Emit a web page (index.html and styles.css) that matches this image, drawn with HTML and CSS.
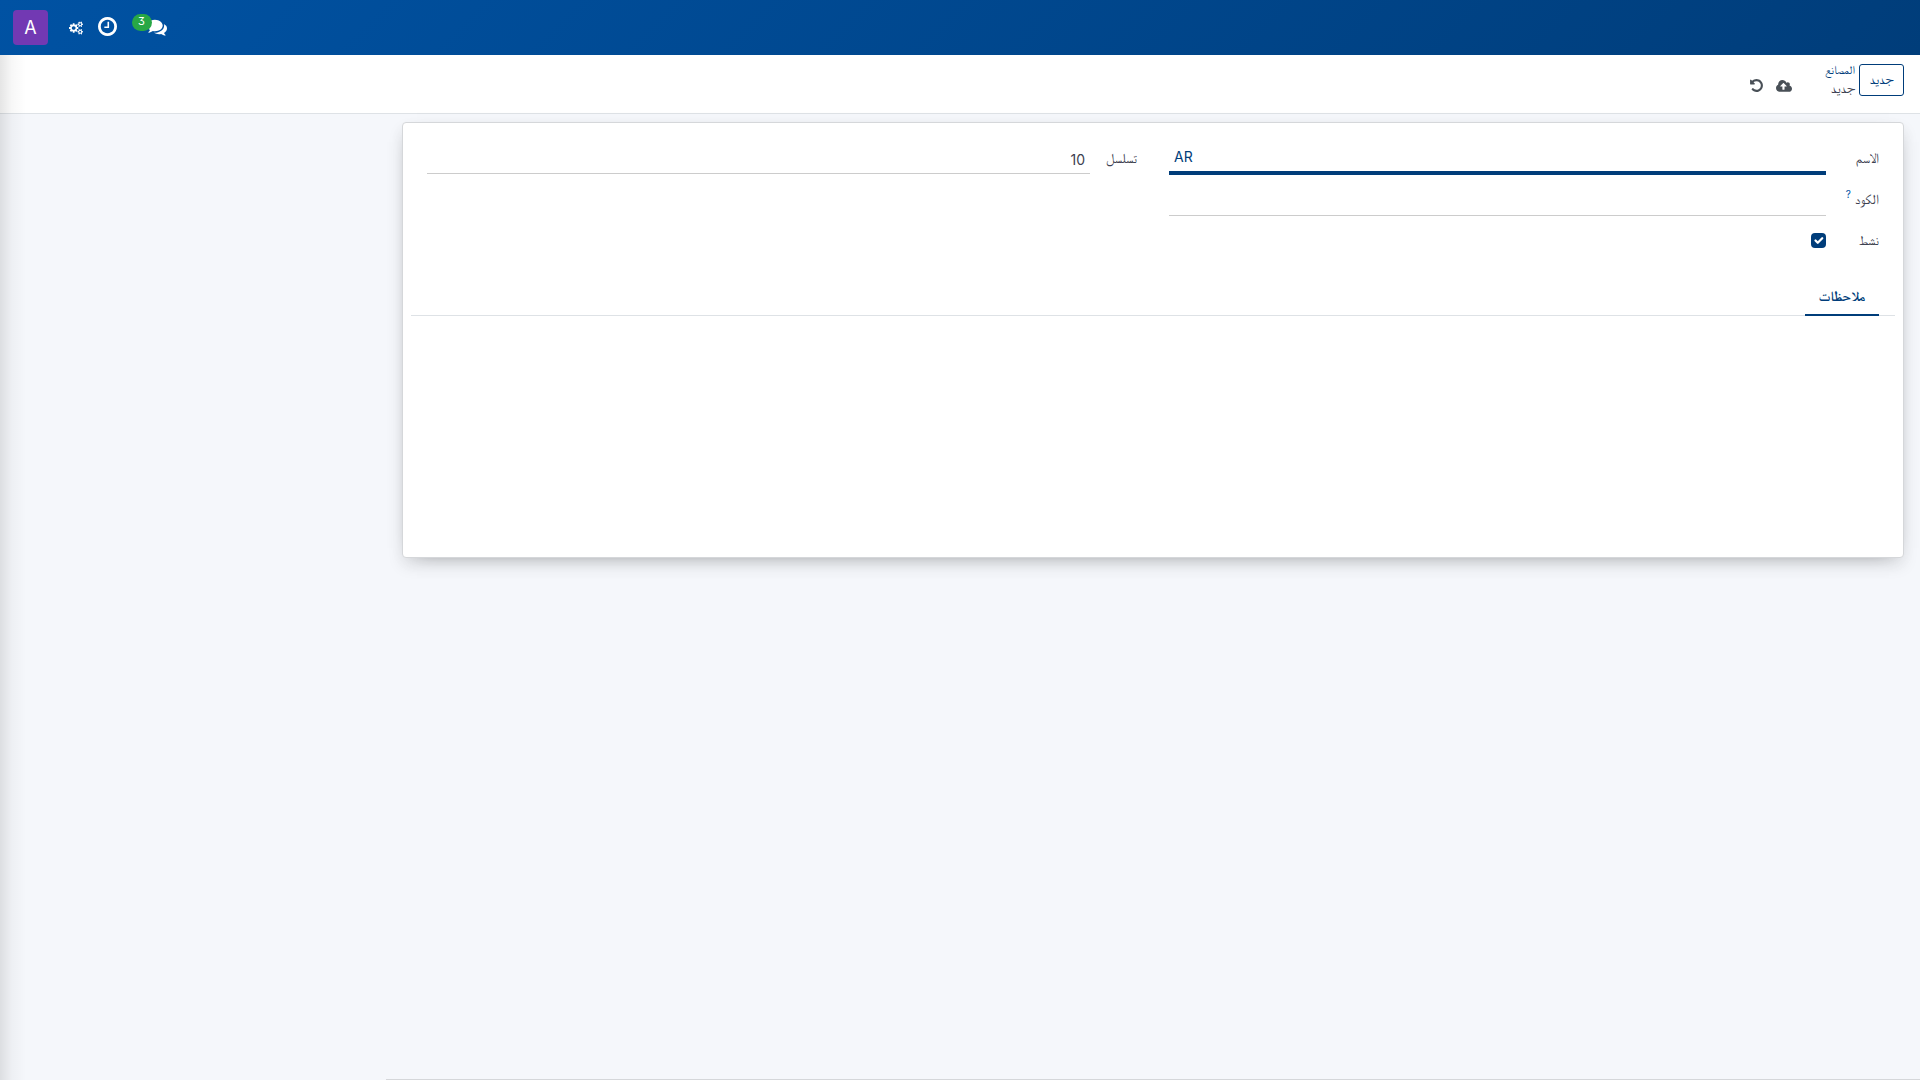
FILE: index.html
```html
<!DOCTYPE html>
<html lang="ar" dir="rtl">
<head>
<meta charset="utf-8">
<title>جديد</title>
<link rel="stylesheet" href="styles.css">
</head>
<body>
<header class="navbar">
  <div class="systray">
    <button class="nav-item messages" aria-label="messages">
      <svg class="icon icon-comments" viewBox="0 0 1792 1792"><path d="M1408 768q0 139-94 257t-256.5 186.5-353.5 68.5q-86 0-176-16-124 88-278 128-36 9-86 16h-3q-11 0-20.5-8t-11.5-21q-1-3-1-6.5t.5-6.5 2-6l2.5-5 3.5-5.5 4-5 4.5-5 4-4.5q5-6 23-25t26-29.5 22.5-29 25-38.5 20.5-44q-124-72-195-177t-71-224q0-139 94-257t256.5-186.5 353.5-68.5 353.5 68.5 256.5 186.5 94 257zm384 256q0 120-71 224.5t-195 176.5q10 24 20.5 44t25 38.5 22.5 29 26 29.5 23 25q1 1 4 4.5t4.5 5 4 5 3.5 5.5l2.5 5 2 6 .5 6.5-1 6.5q-3 14-13 22t-22 7q-50-7-86-16-154-40-278-128-90 16-176 16-271 0-472-132 58 4 88 4 161 0 309-45t264-129q125-92 192-212t67-254q0-77-23-152 129 71 204 178t75 230z"/></svg>
      <span class="badge">3</span>
    </button>
    <button class="nav-item" aria-label="activities">
      <svg class="icon icon-clock" viewBox="128 128 1536 1536"><path d="M1024 544v448q0 14-9 23t-23 9h-320q-14 0-23-9t-9-23v-64q0-14 9-23t23-9h224v-352q0-14 9-23t23-9h64q14 0 23 9t9 23zm416 352q0-148-73-273t-198-198-273-73-273 73-198 198-73 273 73 273 198 198 273 73 273-73 198-198 73-273zm224 0q0 209-103 385.5t-279.5 279.5-385.5 103-385.5-103-279.5-279.5-103-385.5 103-385.5 279.5-279.5 385.5-103 385.5 103 279.5 279.5 103 385.5z"/></svg>
    </button>
    <button class="nav-item" aria-label="settings">
      <svg class="icon icon-cogs" viewBox="0 0 1920 1792"><path d="M896 896q0-106-75-181t-181-75-181 75-75 181 75 181 181 75 181-75 75-181zm768 512q0-52-38-90t-90-38-90 38-38 90q0 53 37.500 90.500t90.500 37.500 90.500-37.500 37.500-90.500zm0-1024q0-52-38-90t-90-38-90 38-38 90q0 53 37.500 90.500t90.500 37.500 90.500-37.500 37.500-90.500zm-384 421v185q0 10-7 19.500t-16 10.500l-155 24q-11 35-32 76 34 48 90 115 7 11 7 20 0 12-7 19-23 30-82.500 89.500t-78.500 59.500q-11 0-21-7l-115-90q-37 19-77 31-11 108-23 155-7 24-30 24h-186q-11 0-20-7.500t-10-17.500l-23-153q-34-10-75-31l-118 89q-7 7-20 7-11 0-21-8-144-133-144-160 0-9 7-19 10-14 41-53t47-61q-23-44-35-82l-152-24q-10-1-17-9.500t-7-19.500v-185q0-10 7-19.500t16-10.500l155-24q11-35 32-76-34-48-90-115-7-11-7-20 0-12 7-20 22-30 82-89t79-59q11 0 21 7l115 90q34-18 77-32 11-108 23-154 7-24 30-24h186q11 0 20 7.500t10 17.500l23 153q34 10 75 31l118-89q8-7 20-7 11 0 21 8 144 133 144 160 0 8-7 19-12 16-42 54t-45 60q23 48 34 82l152 23q10 2 17 10.500t7 19.500zm640 533v140q0 16-149 31-12 27-30 52 51 113 51 138 0 4-4 7-122 71-124 71-8 0-46-47t-52-68q-20 2-30 2t-30-2q-14 21-52 68t-46 47q-2 0-124-71-4-3-4-7 0-25 51-138-18-25-30-52-149-15-149-31v-140q0-16 149-31 13-29 30-52-51-113-51-138 0-4 4-7 4-2 35-20t59-34 30-16q8 0 46 46.500t52 67.500q20-2 30-2t30 2q51-71 92-112l6-2q4 0 124 70 4 3 4 7 0 25-51 138 17 23 30 52 149 15 149 31zm0-1024v140q0 16-149 31-12 27-30 52 51 113 51 138 0 4-4 7-122 71-124 71-8 0-46-47t-52-68q-20 2-30 2t-30-2q-14 21-52 68t-46 47q-2 0-124-71-4-3-4-7 0-25 51-138-18-25-30-52-149-15-149-31v-140q0-16 149-31 13-29 30-52-51-113-51-138 0-4 4-7 4-2 35-20t59-34 30-16q8 0 46 46.500t52 67.500q20-2 30-2t30 2q51-71 92-112l6-2q4 0 124 70 4 3 4 7 0 25-51 138 17 23 30 52 149 15 149 31z"/></svg>
    </button>
    <button class="avatar">A</button>
  </div>
</header>

<section class="control-panel">
  <button class="btn-new">جديد</button>
  <nav class="breadcrumb">
    <a class="crumb-link" href="#">المصانع</a>
    <span class="crumb-current">جديد</span>
  </nav>
  <div class="status-actions">
    <svg class="icon icon-cloud" viewBox="0 0 1920 1792"><path d="M1280 864q0-14-9-23l-352-352q-9-9-23-9t-23 9l-351 351q-10 12-10 24 0 14 9 23t23 9h224v352q0 13 9.500 22.500t22.500 9.500h192q13 0 22.500-9.500t9.500-22.500v-352h224q13 0 22.500-9.500t9.500-22.500zm640 288q0 159-112.500 271.500t-271.500 112.500h-1088q-185 0-316.500-131.500t-131.500-316.500q0-130 70-240t188-165q-2-30-2-43 0-212 150-362t362-150q156 0 285.500 87t188.500 231q71-62 166-62 106 0 181 75t75 181q0 76-41 138 130 31 213.500 135.500t83.500 238.500z"/></svg>
    <svg class="icon icon-undo" viewBox="0 0 1792 1792"><path d="M1664 896q0 156-61 298t-164 245-245 164-298 61q-172 0-327-72.500t-264-204.500q-7-10-6.500-22.500t8.500-20.500l137-138q10-9 25-9 16 2 23 12 73 95 179 147t225 52q104 0 198.500-40.500t163.500-109.500 109.500-163.500 40.500-198.500-40.500-198.500-109.500-163.500-163.500-109.500-198.500-40.500q-98 0-188 35.500t-160 101.500l137 138q31 30 14 69-17 40-59 40h-448q-26 0-45-19t-19-45v-448q0-42 40-59 39-17 69 14l130 129q107-101 244.500-156.500t284.500-55.500q156 0 298 61t245 164 164 245 61 298z"/></svg>
  </div>
</section>

<main class="content">
  <section class="sheet">
    <div class="groups">
      <div class="group group-main">
        <label class="label">الاسم</label>
        <div class="field field-focus">AR</div>
        <label class="label label-low">الكود <sup class="help">?</sup></label>
        <div class="field"></div>
        <label class="label label-low">نشط</label>
        <div class="check-cell"><span class="checkbox"><svg viewBox="0 0 20 20"><path d="m6 10 3 3 6-6"/></svg></span></div>
      </div>
      <div class="group group-side">
        <label class="label">تسلسل</label>
        <div class="field field-number">10</div>
      </div>
    </div>
    <div class="tabs"><a class="tab" href="#">ملاحظات</a></div>
  </section>
</main>
<footer class="chatter-edge"></footer>
<div class="edge-shade"></div>
</body>
</html>
```
FILE: styles.css
```css
* { box-sizing: border-box; }
body {
  margin: 0;
  height: 100vh;
  overflow: hidden;
  display: flex;
  flex-direction: column;
  background: #f5f7fb;
  color: #3d4150;
  font: 14px/20px Inter, FreeSerif, "DejaVu Sans", sans-serif;
}
button { font: inherit; padding: 0; border: 0; background: none; }
a { text-decoration: none; }
.icon { display: block; fill: currentColor; }

.navbar {
  flex: none;
  height: 55px;
  display: flex;
  justify-content: flex-end;
  color: #fff;
  background: linear-gradient(135deg, #0052a3 0%, #003d7a 100%);
}
.systray { display: flex; align-items: center; padding-left: 13px; }
.nav-item { color: #fff; }
.messages { position: relative; margin-left: 30px; }
.icon-comments { width: 20px; height: 20px; margin-top: -2px; }
.badge {
  position: absolute;
  left: -15px;
  top: -5px;
  width: 20px;
  height: 17px;
  padding-right: 1px;
  border-radius: 9px;
  background: #28a745;
  font-size: 11px;
  font-feature-settings: "cv09";
  line-height: 14px;
  text-align: center;
}
.icon-clock { width: 19px; height: 19px; margin-top: -2px; }
.icon-cogs { width: 14px; height: 14px; margin: 0 15px; }
.avatar {
  width: 35px;
  height: 35px;
  margin-right: 6px;
  border-radius: 4px;
  background: #7239b3;
  color: #fff;
  font-size: 18px;
}

.control-panel {
  flex: none;
  height: 59px;
  display: flex;
  align-items: flex-start;
  padding: 9px 16px 0;
  background: #fff;
  border-bottom: 1px solid #dee2e6;
}
.btn-new {
  width: 45px;
  height: 32px;
  padding-bottom: 2px;
  border: 1px solid #003d7a;
  border-radius: 3px;
  color: #003d7a;
  font-size: 15px;
}
.breadcrumb { display: flex; flex-direction: column; width: 62px; margin: -3px 4px 0 1px; line-height: 18px; }
.crumb-link { color: #003d7a; font-size: 12px; }
.crumb-current { font-size: 15px; }
.status-actions { display: flex; align-items: center; gap: 12px; height: 26px; margin-top: 9px; color: #495057; }
.icon-cloud { width: 16px; height: 15px; }
.icon-undo { width: 15px; height: 15px; margin-top: -1px; }

.content { flex: 1; padding: 8px 16px 0; }
.sheet {
  width: 1502px;
  height: 436px;
  padding: 24px;
  background: #fff;
  border: 1px solid #d5d7da;
  border-radius: 4px;
  box-shadow: 0 5px 20px -15px rgba(0, 0, 0, .7), 0 8px 16px rgba(0, 0, 0, .09);
}
.groups { display: flex; justify-content: space-between; }
.group { display: grid; align-content: start; }
.group-main { grid-template-columns: 53px 657px; grid-template-rows: 28px 41px 41px; }
.group-side { grid-template-columns: 47px 663px; grid-template-rows: 27px; }
.label { line-height: 22px; }
.label-low { padding-top: 13px; }
.help { font-size: 10px; line-height: 0; color: #0052a3; }
.field { border-bottom: 1px solid #ccc; padding: 0 5px; font-size: 14px; line-height: 26px; }
.field-focus { border-bottom: 4px solid #003d7a; color: #003d7a; direction: ltr; line-height: 20px; }
.checkbox {
  display: block;
  width: 15px;
  height: 15px;
  margin-top: 17px;
  border-radius: 4px;
  background: #003d7a;
}
.checkbox svg { display: block; fill: none; stroke: #fff; stroke-width: 3; stroke-linecap: round; stroke-linejoin: round; }
.tabs { display: flex; margin: 20px -16px 0; padding: 0 16px; box-shadow: inset 0 -1px #dee2e6; }
.tab {
  width: 74px;
  height: 39px;
  padding-top: 9px;
  border-bottom: 2px solid #003d7a;
  color: #003d7a;
  font-weight: 700;
  text-align: center;
}

.chatter-edge { flex: none; height: 1px; width: 1534px; background: #d5d7da; }
.edge-shade {
  position: absolute;
  left: 0;
  top: 55px;
  width: 26px;
  bottom: 0;
  background: linear-gradient(to right, rgba(0, 0, 0, .1), rgba(0, 0, 0, .03) 45%, transparent);
}
```
